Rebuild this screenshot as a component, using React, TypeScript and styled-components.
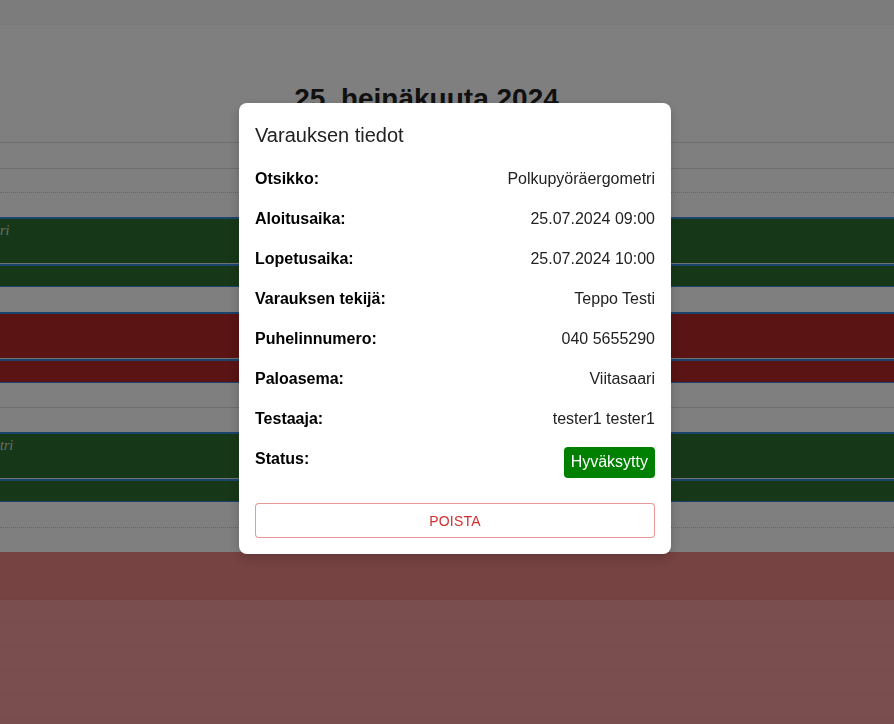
import React from "react";
import styled, { createGlobalStyle } from "styled-components";

const GlobalStyle = createGlobalStyle`
  html, body { margin: 0; padding: 0; background: #fff; overflow: hidden; }
  body { font-family: "Liberation Sans", Arial, sans-serif; }
  * { box-sizing: border-box; }
`;

const Page = styled.div`
  height: 724px;
  overflow: hidden;
  display: flex;
  flex-direction: column;
`;

const NavBar = styled.div`
  height: 25px;
  flex: none;
  background: #f9f9f9;
  border-bottom: 1px solid #f2f2f2;
`;

const Heading = styled.h2`
  margin: 58px 41px 27px 0;
  font-family: "Liberation Sans", Arial, sans-serif;
  font-weight: 700;
  font-size: 28px;
  line-height: 32px;
  color: #222;
  text-align: center;
`;

const Grid = styled.div`
  display: flex;
  flex-direction: column;
  flex: 1;
`;

const Slot = styled.div<{ $h: number; $line?: "solid" | "dotted" | "none" }>`
  height: ${(p) => p.$h}px;
  flex: none;
  border-top: ${(p) =>
    p.$line === "solid" ? "1px solid #ddd" : p.$line === "dotted" ? "1px dotted #ccc" : "none"};
  background: #fff;
`;

const EventBlock = styled.div<{ $bg: string }>`
  flex: none;
  display: flex;
  flex-direction: column;
  background: ${(p) => p.$bg};
  border-top: 2px solid #3788d8;
  border-bottom: 1px solid #3788d8;
`;

const EventMain = styled.div`
  height: 44px;
  padding-top: 4px;
`;

const EventDivider = styled.div`
  height: 3px;
  border-top: 1px solid #dfe4ea;
  background: #3788d8;
`;

const EventLower = styled.div<{ $h: number }>`
  height: ${(p) => p.$h}px;
`;

const EventTitle = styled.div`
  white-space: nowrap;
  font-family: "Liberation Serif", "Times New Roman", serif;
  font-style: italic;
  font-size: 14px;
  line-height: 16px;
  color: #d6dad6;
`;

const PinkBand = styled.div<{ $h: number; $bg: string }>`
  height: ${(p) => p.$h}px;
  flex: none;
  background: ${(p) => p.$bg};
  border-bottom: 1px solid rgba(0, 0, 0, 0.025);
`;

const Overlay = styled.div`
  position: fixed;
  inset: 0;
  background: rgba(0, 0, 0, 0.5);
  display: flex;
  justify-content: center;
  align-items: flex-start;
  padding: 103px 0 0 16px;
`;

const Modal = styled.div`
  width: 432px;
  background: #fff;
  border-radius: 8px;
  padding: 16px;
  box-shadow: 0 4px 12px rgba(0, 0, 0, 0.2);
  display: flex;
  flex-direction: column;
`;

const ModalTitle = styled.div`
  font-size: 20px;
  line-height: 32px;
  color: #222;
  margin-bottom: 16px;
`;

const Rows = styled.div`
  display: flex;
  flex-direction: column;
  gap: 16px;
`;

const Row = styled.div`
  display: flex;
  justify-content: space-between;
  align-items: flex-start;
  font-size: 16px;
  line-height: 24px;
`;

const Label = styled.span`
  font-weight: 700;
  color: #000;
`;

const Value = styled.span`
  color: #222;
`;

const Badge = styled.span`
  background: #008000;
  color: #fff;
  padding: 3px 7px 4px;
  border-radius: 4px;
  line-height: 24px;
`;

const DeleteButton = styled.button`
  margin-top: 25px;
  height: 35px;
  width: 100%;
  background: #fff;
  border: 1px solid rgba(211, 47, 47, 0.5);
  border-radius: 4px;
  color: #d32f2f;
  font-family: "Liberation Sans", Arial, sans-serif;
  font-size: 14px;
  letter-spacing: 0.2px;
  text-transform: uppercase;
  cursor: pointer;
`;

const details: [string, string][] = [
  ["Otsikko:", "Polkupyöräergometri"],
  ["Aloitusaika:", "25.07.2024 09:00"],
  ["Lopetusaika:", "25.07.2024 10:00"],
  ["Varauksen tekijä:", "Teppo Testi"],
  ["Puhelinnumero:", "040 5655290"],
  ["Paloasema:", "Viitasaari"],
  ["Testaaja:", "tester1 tester1"],
];

const Event: React.FC<{ bg: string; title?: string; lower: number }> = ({ bg, title, lower }) => (
  <EventBlock $bg={bg}>
    <EventMain>{title && <EventTitle>{title}</EventTitle>}</EventMain>
    <EventDivider />
    <EventLower $h={lower} />
  </EventBlock>
);

export default function App() {
  return (
    <>
      <GlobalStyle />
      <Page>
        <NavBar />
        <Heading>25. heinäkuuta 2024</Heading>
        <Grid>
          <Slot $h={26} $line="solid" />
          <Slot $h={24} $line="solid" />
          <Slot $h={25} $line="dotted" />
          <Event bg="#2e7030" title="ri" lower={20} />
          <Slot $h={25} />
          <Event bg="#b42828" lower={21} />
          <Slot $h={24} />
          <Slot $h={25} $line="solid" />
          <Event bg="#2e7030" title="tri" lower={20} />
          <Slot $h={25} />
          <Slot $h={25} $line="dotted" />
          <PinkBand $h={48} $bg="#ee8684" />
          {Array.from({ length: 6 }).map((_, i) => (
            <PinkBand key={i} $h={24} $bg="#f49c9c" />
          ))}
        </Grid>
      </Page>
      <Overlay>
        <Modal>
          <ModalTitle>Varauksen tiedot</ModalTitle>
          <Rows>
            {details.map(([k, v]) => (
              <Row key={k}>
                <Label>{k}</Label>
                <Value>{v}</Value>
              </Row>
            ))}
            <Row>
              <Label>Status:</Label>
              <Badge>Hyväksytty</Badge>
            </Row>
          </Rows>
          <DeleteButton>Poista</DeleteButton>
        </Modal>
      </Overlay>
    </>
  );
}
